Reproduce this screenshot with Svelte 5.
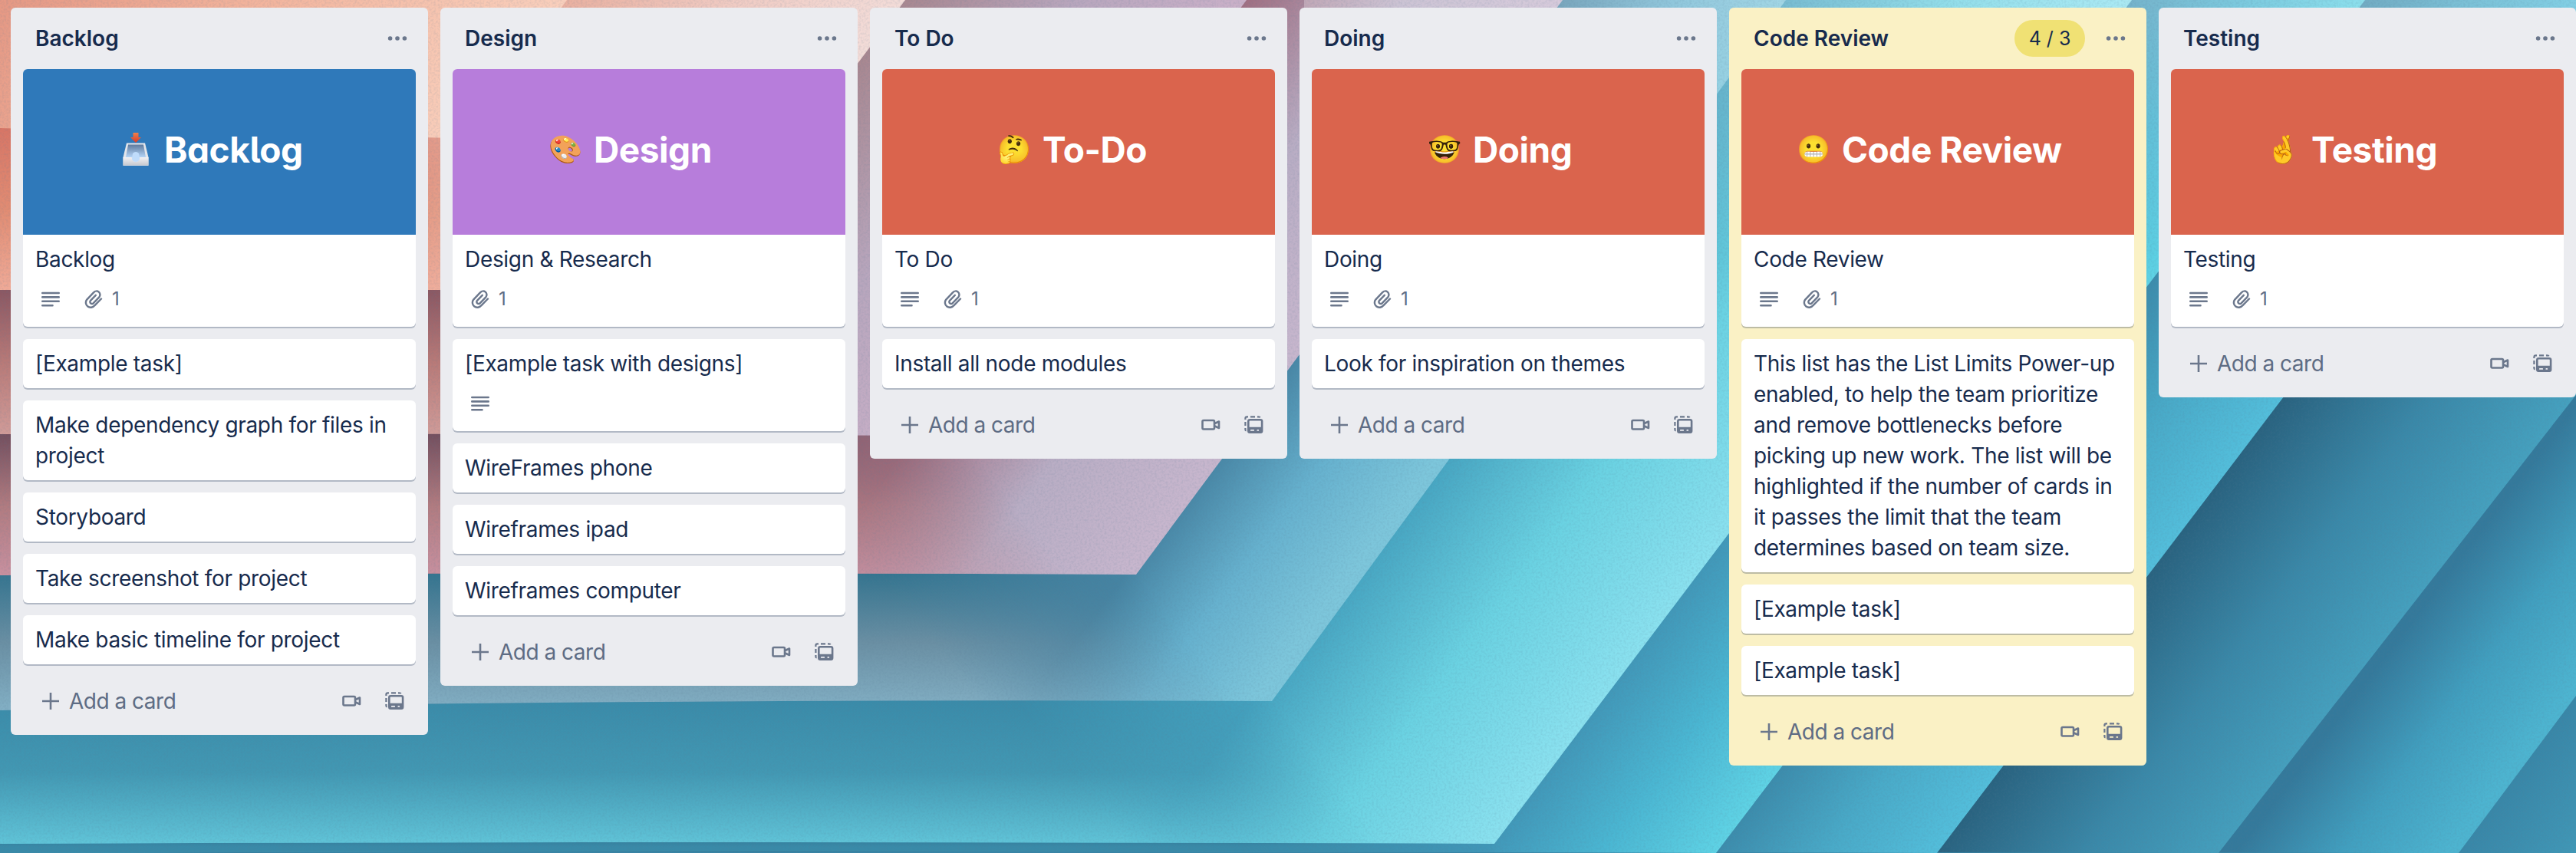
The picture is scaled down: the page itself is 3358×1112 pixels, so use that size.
<script>
  // Folded-paper backdrop: each sheet is a chevron with a slanted right side
  // (top -> corner) and a nearly flat lower side (corner -> left).
  // side: stops across the slanted part, arm: stops down the flat part,
  // inner: corner of the sheet lying on top, where the fold turns.
  const sheets = [
    { from: 4035, top: 4400, corner: [3500, 1200], left: 1200, armTop: 1150, side: ['#3885a6', '#4199b8', '#4cb0cc'] },
    { from: 3760, top: 4035, corner: [3205, 1112], left: 1112, armTop: 1112, side: ['#34799b', '#419fbf', '#4db4d0'] },
    { from: 3368, top: 3760, corner: [2892, 1112], left: 1112, armTop: 1112, side: ['#29627f', '#3a88a8', '#46a2c0'] },
    { from: 3083, top: 3370, corner: [2525, 1112], left: 1112, armTop: 1112, side: ['#3c8cac', '#49aac8', '#53bedb'] },
    { from: 2779, top: 3083, corner: [2237, 1112], left: 1112, armTop: 1096, inner: [1948, 1100], side: ['#4197b8', '#4ab6d2', '#5fd3e5'], arm: ['#36809e', '#398aa8', '#398aa8'] },
    { from: 2328, top: 2779, corner: [1948, 1100], left: 1100, armTop: 914, inner: [1658, 914], side: ['#45a3c0', '#6ad2e2', '#8ae1ef'], arm: ['#3a8ba9', '#4298b3', '#60c4d8'] },
    { from: 2037, top: 2328, corner: [1658, 914], left: 926, armTop: 748, inner: [1481, 749], side: ['#4785a4', '#66b1ce', '#7dc6db'], arm: ['#34748f', '#6a8fa3', '#83b0c5'] },
    { from: 1625, top: 2037, corner: [1481, 749], left: 750, armTop: 568, inner: [1250, 568], side: ['#a06f82', '#b9adc4', '#c7b6cd'], arm: ['#75505f', '#b17b80', '#c8909f'] },
    { from: 1180, top: 1625, corner: [1196, 568], left: 566, armTop: 380, inner: [895, 380], side: ['#a88790', '#b8a6bd', '#cab0c8'], arm: ['#8b5863', '#b97a78', '#d09b98'] },
    { from: 739, top: 1180, corner: [895, 380], left: 378, armTop: 170, inner: [690, 180], side: ['#e9b0a0', '#f0cbc3', '#f3dcd8'], arm: ['#d87666', '#e18c73', '#f0aa97'] },
    { from: 0, top: 739, corner: [604, 180], left: 167, armTop: 0, side: ['#e59884', '#f3b69f', '#f9cfbc'] }
  ];

  const lists = [
    { title: 'Backlog', cover: { text: 'Backlog', emoji: '', color: '#2f79ba', offset: 127 },
      cards: [{ text: 'Backlog', lines: true, clip: true }, { text: '[Example task]' }, { text: 'Make dependency graph for files in project' }, { text: 'Storyboard' }, { text: 'Take screenshot for project' }, { text: 'Make basic timeline for project' }] },
    { title: 'Design', cover: { text: 'Design', emoji: '🎨', color: '#b77ddb', offset: 127 },
      cards: [{ text: 'Design & Research', clip: true }, { text: '[Example task with designs]', lines: true }, { text: 'WireFrames phone' }, { text: 'Wireframes ipad' }, { text: 'Wireframes computer' }] },
    { title: 'To Do', cover: { text: 'To-Do', emoji: '🤔', color: '#da644d', offset: 152 },
      cards: [{ text: 'To Do', lines: true, clip: true }, { text: 'Install all node modules' }] },
    { title: 'Doing', cover: { text: 'Doing', emoji: '🤓', color: '#da644d', offset: 153 },
      cards: [{ text: 'Doing', lines: true, clip: true }, { text: 'Look for inspiration on themes' }] },
    { title: 'Code Review', limit: '4 / 3', cover: { text: 'Code Review', emoji: '😬', color: '#da644d', offset: 74 },
      cards: [{ text: 'Code Review', lines: true, clip: true }, { text: 'This list has the List Limits Power-up enabled, to help the team prioritize and remove bottlenecks before picking up new work. The list will be highlighted if the number of cards in it passes the limit that the team determines based on team size.' }, { text: '[Example task]' }, { text: '[Example task]' }] },
    { title: 'Testing', cover: { text: 'Testing', emoji: '🤞', color: '#da644d', offset: 126 },
      cards: [{ text: 'Testing', lines: true, clip: true }] }
  ];
</script>

<div class="board">
  <svg class="backdrop" viewBox="0 0 3358 1112" preserveAspectRatio="none" aria-hidden="true">
    <defs>
      {#each sheets as s, i}
        <linearGradient id="side{i}" gradientUnits="userSpaceOnUse" x1={s.from} y1="0" x2={s.from + (s.top - s.from) * 0.634} y2={(s.top - s.from) * 0.482}>
          {#each s.side as c, k}<stop offset={k / 2} stop-color={c} />{/each}
        </linearGradient>
        {#if s.arm}
          <linearGradient id="arm{i}" gradientUnits="userSpaceOnUse" x1="0" y1={s.armTop} x2="0" y2={s.left}>
            {#each s.arm as c, k}<stop offset={k / 2} stop-color={c} />{/each}
          </linearGradient>
          <linearGradient id="fade{i}" gradientUnits="userSpaceOnUse" x1={s.inner[0] - 210} y1={s.inner[1] + 160} x2={s.inner[0]} y2={s.inner[1]}>
            <stop offset="0" stop-color="#fff" /><stop offset="1" stop-color="#000" />
          </linearGradient>
          <mask id="mask{i}" maskUnits="userSpaceOnUse" x="0" y="0" width="3358" height="1112"><rect width="3358" height="1112" fill="url(#fade{i})" /></mask>
        {/if}
      {/each}
      <linearGradient id="glow" x1="0" y1="0" x2="0" y2="1">
        <stop offset="0" stop-color="#fff" stop-opacity=".28" /><stop offset=".3" stop-color="#fff" stop-opacity="0" />
      </linearGradient>
      <filter id="weave" x="0" y="0" width="100%" height="100%">
        <feTurbulence type="fractalNoise" baseFrequency=".35 .35" numOctaves="2" seed="4" />
        <feColorMatrix values="0 0 0 0 .1  0 0 0 0 .2  0 0 0 0 .3  .9 0 0 0 -.36" />
      </filter>
    </defs>
    {#each sheets as s, i}
      <path d="M0 0H{s.top}L{s.corner[0]} {s.corner[1]}Q{s.corner[0] / 2} {s.corner[1] - 4} 0 {s.left}Z" fill="url(#side{i})" />
      {#if s.arm}
        <path d="M0 {s.armTop - 20}H{s.corner[0] + (s.top - s.corner[0]) * (s.corner[1] - s.armTop + 20) / s.corner[1]}L{s.corner[0]} {s.corner[1]}Q{s.corner[0] / 2} {s.corner[1] - 4} 0 {s.left}Z" fill="url(#arm{i})" mask="url(#mask{i})" />
      {/if}
    {/each}
    <rect x="1700" width="1658" height="1112" fill="url(#glow)" />
    <rect width="3358" height="1112" filter="url(#weave)" opacity=".35" />
  </svg>

  <div class="lists">
    {#each lists as list}
      <section class="list" class:over={list.limit}>
        <header>
          <h2>{list.title}</h2>
          {#if list.limit}<span class="limit">{list.limit}</span>{/if}
          <svg class="menu" width="26" height="8" viewBox="0 0 26 8"><circle cx="3.6" cy="4" r="2.8" /><circle cx="13" cy="4" r="2.8" /><circle cx="22.4" cy="4" r="2.8" /></svg>
        </header>
        <div class="cards">
          {#each list.cards as card, n}
            <article class="card">
              {#if n === 0}
                <div class="cover" style:background={list.cover.color} style:padding-left="{list.cover.offset}px">
                  <span class="emoji">
                    {#if list.cover.emoji}{list.cover.emoji}{:else}
                      <svg width="40" height="46" viewBox="0 0 40 46">
                        <defs>
                          <linearGradient id="trayIn" x1="0" y1="0" x2="0" y2="1"><stop offset="0" stop-color="#5f7b9f" /><stop offset="1" stop-color="#b4d4f6" /></linearGradient>
                          <linearGradient id="trayFront" x1="0" y1="0" x2="0" y2="1"><stop offset="0" stop-color="#f2f2f4" /><stop offset="1" stop-color="#c6c9d0" /></linearGradient>
                          <linearGradient id="arrow" x1="0" y1="0" x2="0" y2="1"><stop offset="0" stop-color="#f0804a" /><stop offset="1" stop-color="#d63a2a" /></linearGradient>
                        </defs>
                        <path d="M8 14.500H32L36.500 33V44H3.500V33Z" fill="#e3e6eb" />
                        <path d="M10 16.500H30L33 33H7Z" fill="url(#trayIn)" />
                        <path d="M3.500 33H13.500Q15 33 15 35Q16 39 20 39T25 35Q25 33 26.500 33H36.500V43.500H3.500Z" fill="url(#trayFront)" />
                        <path d="M15 35Q16 39 20 39T25 35L24 28Q20 24 16 28Z" fill="#bfdcfb" />
                        <path d="M16.500 1H23.500V7H27L20 14L13 7H16.500Z" fill="url(#arrow)" />
                      </svg>
                    {/if}
                  </span>
                  <span class="cover-title">{list.cover.text}</span>
                </div>
              {/if}
              <div class="body">
                <p>{card.text}</p>
                {#if card.lines || card.clip}
                  <div class="badges">
                    {#if card.lines}
                      <svg width="24" height="20" viewBox="0 0 24 20"><path d="M1.300 2H22.700M1.300 7.400H22.700M1.300 12.800H22.700M1.300 18.200H14.500" /></svg>
                    {/if}
                    {#if card.clip}
                      <span class="clip">
                        <svg width="24" height="24" viewBox="0 0 24 24"><path d="M22 11.500L13.300 20.300A6.100 6.100 0 0 1 3.200 12.600L12.200 3.200A4.500 4.500 0 0 1 19.300 9.300L11.800 17.200A2.500 2.500 0 0 1 8 13.800L14.800 6.800" /></svg>
                        1
                      </span>
                    {/if}
                  </div>
                {/if}
              </div>
            </article>
          {/each}
        </div>
        <footer>
          <svg width="24" height="24" viewBox="0 0 24 24"><path d="M12 1V23M1 12H23" /></svg>
          <span>Add a card</span>
          <svg class="video" width="25" height="16" viewBox="0 0 25 16"><rect x="1.500" y="2" width="15.500" height="11.500" rx="1.500" /><path d="M17 6.300L23 3.500V12L17 9.300" /></svg>
          <svg width="25" height="24" viewBox="0 0 25 24">
            <rect x="5.300" y="5.300" width="17.800" height="16.500" rx="2" />
            <path class="solid" d="M5 14.800H23.500V20Q23.500 22.500 21.500 22.500H7Q5 22.500 5 20Z" />
            <path class="slots" d="M8.800 18.900H12.200M17.300 18.900H18.300" />
            <path class="dashes" d="M1.400 5V3.400Q1.400 1.400 3.400 1.400H5M8 1.400H14M17 1.400H18.500Q20.200 1.400 20.500 2.400M1.400 8V13M1.400 16V18Q1.400 19.300 2.600 19.500" />
          </svg>
        </footer>
      </section>
    {/each}
  </div>
</div>

<style>
  :global(body) { margin: 0; overflow: hidden; }
  .board { position: relative; width: 3358px; height: 1112px; overflow: hidden; font: 400 28px/40px Inter, 'Liberation Sans', sans-serif; color: #172b4d; }
  .backdrop { position: absolute; inset: 0; width: 100%; height: 100%; }
  .lists { position: relative; display: flex; align-items: flex-start; gap: 16px; padding: 10px 0 0 14px; }
  .list { flex: 0 0 544px; box-sizing: border-box; border-radius: 6px; background: #ebecf0; }
  .list.over { background: #faf1c5; }
  header { display: flex; align-items: center; height: 80px; box-sizing: border-box; padding: 0 27px 0 32px; }
  h2 { flex: 1; margin: 0; font-size: 28px; font-weight: 600; }
  .limit { width: 92px; height: 48px; margin-right: 27px; border-radius: 24px; background: #f0e174; font-size: 25px; line-height: 48px; text-align: center; }
  .menu { fill: #6b778c; }
  .cards { display: flex; flex-direction: column; gap: 16px; padding: 0 16px; }
  .card { border-radius: 6px; overflow: hidden; background: #fff; box-shadow: 0 2px 0 rgba(9, 30, 66, .25); }
  .cover { display: flex; align-items: center; gap: 17px; height: 216px; box-sizing: border-box; padding-bottom: 6px; }
  .emoji { display: flex; justify-content: center; width: 40px; font: 35.5px/46px 'Noto Color Emoji', sans-serif; white-space: nowrap; }
  .emoji svg { flex: none; }
  .cover-title { color: #fff; font-size: 46px; font-weight: 700; line-height: 60px; letter-spacing: -.45px; font-feature-settings: 'cv05', 'cv11'; white-space: nowrap; }
  .body { padding: 12px 8px 12px 16px; }
  p { margin: 0; letter-spacing: -.32px; }
  .badges { display: flex; align-items: center; gap: 32px; height: 44px; box-sizing: border-box; margin-top: 12px; padding: 0 8px 4px; color: #5e6c84; font-size: 24px; }
  .badges svg { fill: none; stroke: #6b778c; stroke-width: 2.600; stroke-linecap: round; stroke-linejoin: round; }
  .clip { display: flex; align-items: center; gap: 12px; }
  .clip svg { stroke-width: 2.400; }
  footer { display: flex; align-items: center; height: 92px; box-sizing: border-box; padding: 4px 31px 0 40px; color: #5e6c84; letter-spacing: -.5px; }
  footer svg { fill: none; stroke: #6b778c; stroke-width: 2.600; stroke-linejoin: round; }
  footer span { flex: 1; padding-left: 12px; }
  footer .video { margin-right: 31px; }
  footer .solid { fill: #6b778c; stroke: none; }
  footer .dashes { stroke-width: 2.200; }
  footer .slots { stroke: #ebecf0; stroke-width: 1.800; stroke-linecap: round; }
  .over .slots { stroke: #faf1c5; }
</style>
